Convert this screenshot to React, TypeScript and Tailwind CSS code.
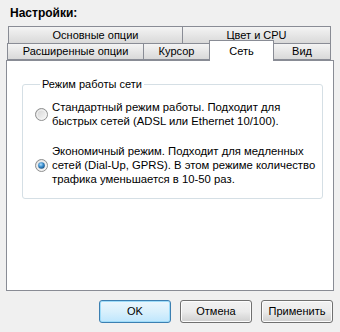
import { ReactNode } from 'react';

function Tab({ label, className }: { label: string; className: string }) {
  return (
    <div
      className={`flex items-center justify-center border border-[#898c95] bg-linear-to-b from-[#f4f4f4] to-[#d9d9d9] ${className}`}
    >
      {label}
    </div>
  );
}

function Radio({ checked }: { checked?: boolean }) {
  return (
    <svg width="13" height="13" viewBox="0 0 13 13" className="shrink-0">
      <defs>
        <linearGradient id="rbg" x1="0" y1="0" x2="1" y2="1">
          <stop offset="0" stopColor="#cfcfcf" />
          <stop offset="1" stopColor="#fdfdfd" />
        </linearGradient>
        <radialGradient id="rdot" cx="0.4" cy="0.35" r="0.7">
          <stop offset="0" stopColor="#b6e0fb" />
          <stop offset="0.5" stopColor="#3a8fd0" />
          <stop offset="1" stopColor="#174c7c" />
        </radialGradient>
      </defs>
      <circle cx="6.5" cy="6.5" r="6" fill="url(#rbg)" stroke="#8e8f8f" />
      <circle cx="6.5" cy="6.5" r="4.5" fill="none" stroke="#f4f4f4" strokeWidth="1" />
      {checked && <circle cx="6.5" cy="6.5" r="3.3" fill="url(#rdot)" />}
    </svg>
  );
}

function Option({ checked, children }: { checked?: boolean; children: ReactNode }) {
  return (
    <label className="flex items-center gap-[4px]">
      <Radio checked={checked} />
      <span className="leading-[14px] text-[11.3px] whitespace-nowrap">{children}</span>
    </label>
  );
}

function Button({ label, primary }: { label: string; primary?: boolean }) {
  return (
    <button
      className={
        primary
          ? 'w-[72px] h-[23px] rounded-[3px] border border-[#3c7fb1] bg-linear-to-b from-[#eaf6fd] via-[#d9f0fc] to-[#bee6fd] shadow-[inset_0_0_0_1px_#9fdcf9]'
          : 'w-[72px] h-[23px] rounded-[3px] border border-[#707070] bg-linear-to-b from-[#f2f2f2] via-[#ebebeb] to-[#cfcfcf] shadow-[inset_0_0_0_1px_#fcfcfc]'
      }
    >
      {label}
    </button>
  );
}

export default function App() {
  return (
    <div className="w-[340px] h-[332px] bg-[#f0f0f0] px-[6px] pt-[6px] text-[11px] text-black font-['Liberation_Sans',Arial,sans-serif]">
      <h1 className="pl-[4px] h-[20px] leading-[14px] text-[12px] font-bold">Настройки:</h1>

      <div className="flex h-[18px] ml-[2px] mr-[3px]">
        <Tab label="Основные опции" className="w-[175px]" />
        <Tab label="Цвет и CPU" className="flex-1 -ml-px" />
      </div>
      <div className="flex items-end h-[17px] ml-[1px] mr-[3px] -mt-px">
        <Tab label="Расширенные опции" className="w-[137px] h-[17px]" />
        <Tab label="Курсор" className="w-[67px] h-[17px] -ml-px" />
        <div className="relative z-10 -ml-px -mb-px w-[65px] h-[21px] flex items-start justify-center pt-[2px] bg-white border border-b-0 border-[#898c95]">
          Сеть
        </div>
        <Tab label="Вид" className="flex-1 h-[17px] -ml-px" />
      </div>

      <div className="h-[231px] bg-white border border-[#898c95] pl-[15px] pr-[10px]">
        <fieldset className="mt-[16px] h-[122px] border border-[#d5dfe5] rounded-[3px] pl-[12px] pr-[6px]">
          <legend className="ml-[5px] px-[2px] leading-[14px]">Режим работы сети</legend>
          <div className="flex flex-col gap-[16px] pt-[9px]">
            <Option>
              Стандартный режим работы. Подходит для
              <br />
              быстрых сетей (ADSL или Ethernet 10/100).
            </Option>
            <Option checked>
              Экономичный режим. Подходит для медленных
              <br />
              сетей (Dial-Up, GPRS). В этом режиме количество
              <br />
              трафика уменьшается в 10-50 раз.
            </Option>
          </div>
        </fieldset>
      </div>

      <div className="flex justify-end gap-[9px] mt-[9px] mr-[1px]">
        <Button label="OK" primary />
        <Button label="Отмена" />
        <Button label="Применить" />
      </div>
    </div>
  );
}
